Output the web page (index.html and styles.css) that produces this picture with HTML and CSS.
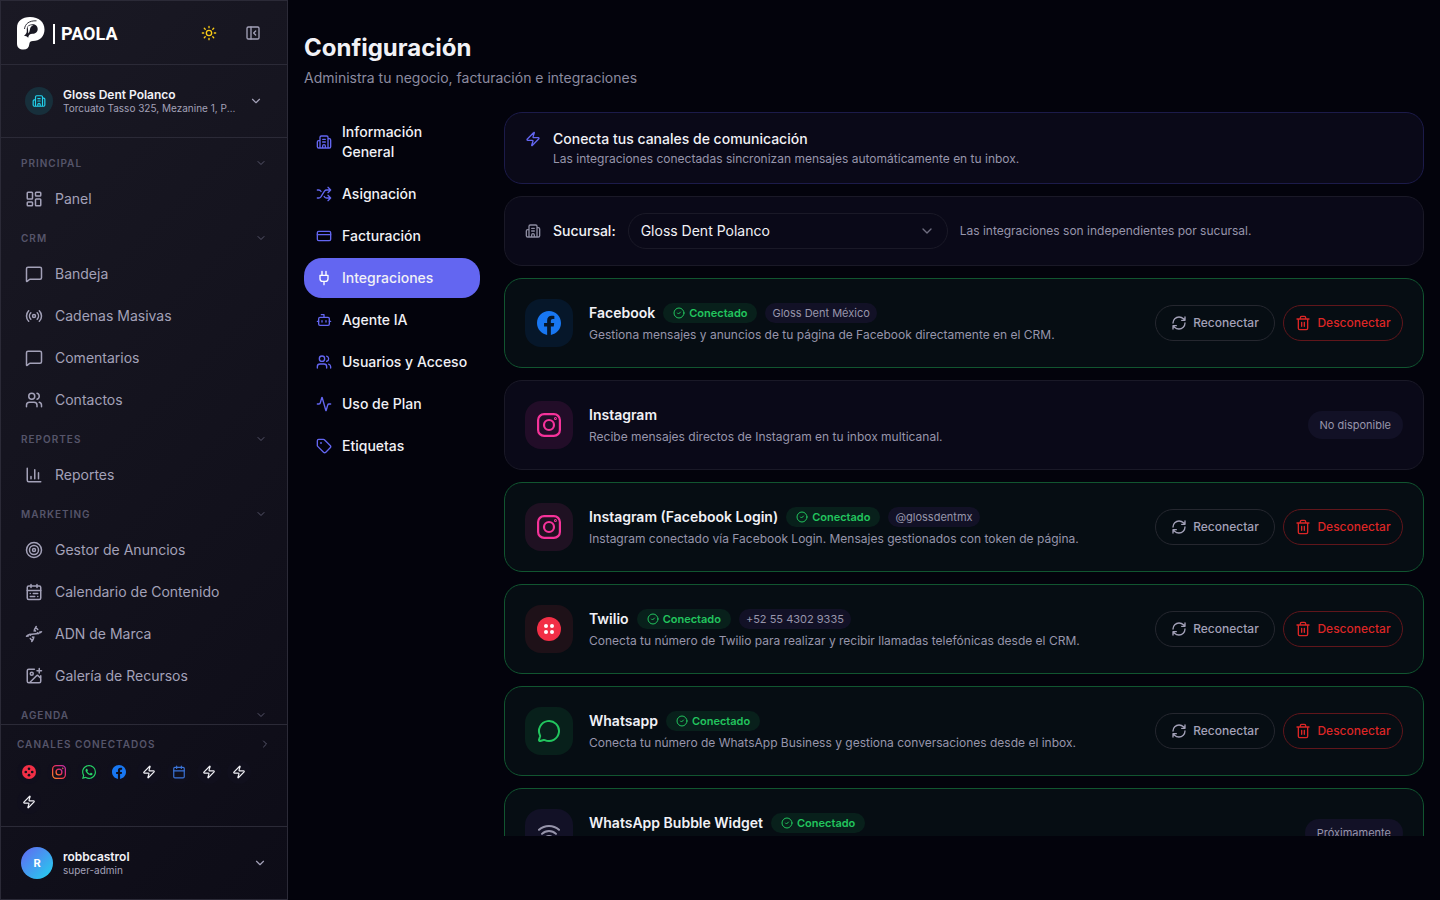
FILE: index.html
```html
<!DOCTYPE html>
<html lang="es">
<head>
  <meta charset="UTF-8">
  <meta name="viewport" content="width=device-width, initial-scale=1.0">
  <title>PAOLA - Configuración</title>
  <link rel="stylesheet" href="styles.css">
</head>
<body>
  <svg class="sprite" aria-hidden="true">
    <defs>
      <linearGradient id="ig" x1="0" y1="1" x2="1" y2="0">
        <stop offset="0" stop-color="#fd8a2b"/>
        <stop offset="0.5" stop-color="#f0314f"/>
        <stop offset="1" stop-color="#c22fb0"/>
      </linearGradient>
    </defs>
    <symbol id="chevron-down" viewBox="0 0 24 24"><path d="m6 9 6 6 6-6"/></symbol>
    <symbol id="chevron-right" viewBox="0 0 24 24"><path d="m9 18 6-6-6-6"/></symbol>
    <symbol id="sun" viewBox="0 0 24 24"><circle cx="12" cy="12" r="4"/><path d="M12 2v2M12 20v2M4.93 4.93l1.41 1.41M17.66 17.66l1.41 1.41M2 12h2M20 12h2M6.34 17.66l-1.41 1.41M19.07 4.93l-1.41 1.41"/></symbol>
    <symbol id="panel-close" viewBox="0 0 24 24"><rect x="3" y="3" width="18" height="18" rx="2"/><path d="M9 3v18M16 15l-3-3 3-3"/></symbol>
    <symbol id="building" viewBox="0 0 24 24"><path d="M10 12h4M10 8h4M14 21v-3a2 2 0 0 0-4 0v3M6 10H4a2 2 0 0 0-2 2v7a2 2 0 0 0 2 2h16a2 2 0 0 0 2-2V9a2 2 0 0 0-2-2h-2M6 21V5a2 2 0 0 1 2-2h8a2 2 0 0 1 2 2v16"/></symbol>
    <symbol id="dashboard" viewBox="0 0 24 24"><rect x="3" y="3" width="7" height="9" rx="1"/><rect x="14" y="3" width="7" height="5" rx="1"/><rect x="14" y="12" width="7" height="9" rx="1"/><rect x="3" y="16" width="7" height="5" rx="1"/></symbol>
    <symbol id="message" viewBox="0 0 24 24"><path d="M22 17a2 2 0 0 1-2 2H6.828a2 2 0 0 0-1.414.586l-2.202 2.202A.71.71 0 0 1 2 21.286V5a2 2 0 0 1 2-2h16a2 2 0 0 1 2 2z"/></symbol>
    <symbol id="radio" viewBox="0 0 24 24"><path d="M16.247 7.761a6 6 0 0 1 0 8.478M19.075 4.933a10 10 0 0 1 0 14.134M4.925 19.067a10 10 0 0 1 0-14.134M7.753 16.239a6 6 0 0 1 0-8.478"/><circle cx="12" cy="12" r="2"/></symbol>
    <symbol id="users" viewBox="0 0 24 24"><path d="M16 21v-2a4 4 0 0 0-4-4H6a4 4 0 0 0-4 4v2M16 3.128a4 4 0 0 1 0 7.744M22 21v-2a4 4 0 0 0-3-3.87"/><circle cx="9" cy="7" r="4"/></symbol>
    <symbol id="chart" viewBox="0 0 24 24"><path d="M3 3v16a2 2 0 0 0 2 2h16M18 17V9M13 17V5M8 17v-3"/></symbol>
    <symbol id="target" viewBox="0 0 24 24"><circle cx="12" cy="12" r="10"/><circle cx="12" cy="12" r="6"/><circle cx="12" cy="12" r="2"/></symbol>
    <symbol id="calendar-range" viewBox="0 0 24 24"><rect x="3" y="4" width="18" height="18" rx="2"/><path d="M16 2v4M3 10h18M8 2v4M17 14h-6M13 18H7M7 14h.01M17 18h.01"/></symbol>
    <symbol id="calendar" viewBox="0 0 24 24"><rect x="3" y="4" width="18" height="18" rx="2"/><path d="M16 2v4M3 10h18M8 2v4"/></symbol>
    <symbol id="dna" viewBox="0 0 24 24"><path d="m10 16 1.5 1.5M14 8l-1.5-1.5M15 2c-1.798 1.998-2.518 3.995-2.807 5.993M16.5 10.5l1 1M17 6l-2.891-2.891M2 15c6.667-6 13.333 0 20-6M20 9l.891.891M3.109 14.109 4 15M6.5 12.5l1 1M7 18l2.891 2.891M9 22c1.798-1.998 2.518-3.995 2.807-5.993"/></symbol>
    <symbol id="image-plus" viewBox="0 0 24 24"><path d="M16 5h6M19 2v6M21 11.5V19a2 2 0 0 1-2 2H5a2 2 0 0 1-2-2V5a2 2 0 0 1 2-2h7.5M21 15l-3.086-3.086a2 2 0 0 0-2.828 0L6 21"/><circle cx="9" cy="9" r="2"/></symbol>
    <symbol id="zap" viewBox="0 0 24 24"><path d="M4 14a1 1 0 0 1-.78-1.63l9.9-10.2a.5.5 0 0 1 .86.46l-1.92 6.02A1 1 0 0 0 13 10h7a1 1 0 0 1 .78 1.63l-9.9 10.2a.5.5 0 0 1-.86-.46l1.92-6.02A1 1 0 0 0 11 14z"/></symbol>
    <symbol id="shuffle" viewBox="0 0 24 24"><path d="m18 14 4 4-4 4M18 2l4 4-4 4M2 18h1.973a4 4 0 0 0 3.3-1.7l5.454-8.6a4 4 0 0 1 3.3-1.7H22M2 6h1.972a4 4 0 0 1 3.6 2.2M22 18h-6.041a4 4 0 0 1-3.3-1.8l-.359-.45"/></symbol>
    <symbol id="card" viewBox="0 0 24 24"><rect x="2" y="5" width="20" height="14" rx="2"/><path d="M2 10h20"/></symbol>
    <symbol id="plug" viewBox="0 0 24 24"><path d="M12 22v-5M9 8V2M15 8V2M18 8v5a4 4 0 0 1-4 4h-4a4 4 0 0 1-4-4V8Z"/></symbol>
    <symbol id="bot" viewBox="0 0 24 24"><path d="M12 8V4H8M2 14h2M20 14h2M15 13v2M9 13v2"/><rect x="4" y="8" width="16" height="12" rx="2"/></symbol>
    <symbol id="activity" viewBox="0 0 24 24"><path d="M22 12h-2.48a2 2 0 0 0-1.93 1.46l-2.35 8.36a.25.25 0 0 1-.48 0L9.24 2.18a.25.25 0 0 0-.48 0l-2.35 8.36A2 2 0 0 1 4.49 12H2"/></symbol>
    <symbol id="tag" viewBox="0 0 24 24"><path d="M12.586 2.586A2 2 0 0 0 11.172 2H4a2 2 0 0 0-2 2v7.172a2 2 0 0 0 .586 1.414l8.704 8.704a2.426 2.426 0 0 0 3.42 0l6.58-6.58a2.426 2.426 0 0 0 0-3.42z"/><circle cx="7.5" cy="7.5" r=".5"/></symbol>
    <symbol id="check-circle" viewBox="0 0 24 24"><circle cx="12" cy="12" r="10"/><path d="m9 12 2 2 4-4"/></symbol>
    <symbol id="refresh" viewBox="0 0 24 24"><path d="M3 12a9 9 0 0 1 9-9 9.75 9.75 0 0 1 6.74 2.74L21 8M21 3v5h-5M21 12a9 9 0 0 1-9 9 9.75 9.75 0 0 1-6.74-2.74L3 16M8 16H3v5"/></symbol>
    <symbol id="trash" viewBox="0 0 24 24"><path d="M3 6h18M19 6v14a2 2 0 0 1-2 2H7a2 2 0 0 1-2-2V6M8 6V4a2 2 0 0 1 2-2h4a2 2 0 0 1 2 2v2M10 11v6M14 11v6"/></symbol>
    <symbol id="bubble" viewBox="0 0 24 24"><path d="M2.992 16.342a2 2 0 0 1 .094 1.167l-1.065 3.29a1 1 0 0 0 1.236 1.168l3.413-.998a2 2 0 0 1 1.099.092 10 10 0 1 0-4.777-4.719"/></symbol>
    <symbol id="wifi" viewBox="0 0 24 24"><path d="M12 20h.01M2 8.82a15 15 0 0 1 20 0M5 12.859a10 10 0 0 1 14 0M8.5 16.429a5 5 0 0 1 7 0"/></symbol>
    <symbol id="instagram" viewBox="0 0 24 24"><rect x="1.100" y="1.100" width="21.800" height="21.800" rx="6" stroke-width="2.200"/><circle cx="12" cy="12" r="5" stroke-width="2.200"/><circle cx="18.400" cy="5.600" r=".5"/></symbol>
    <symbol id="facebook" viewBox="0 0 24 24"><path fill="#1877f2" stroke="none" d="M24 12.073c0-6.627-5.373-12-12-12s-12 5.373-12 12c0 5.99 4.388 10.954 10.125 11.854v-8.385H7.078v-3.47h3.047V9.43c0-3.007 1.792-4.669 4.533-4.669 1.312 0 2.686.235 2.686.235v2.953H15.83c-1.491 0-1.956.925-1.956 1.874v2.25h3.328l-.532 3.47h-2.796v8.385C19.612 23.027 24 18.062 24 12.073z"/></symbol>
    <symbol id="twilio" viewBox="0 0 24 24"><circle cx="12" cy="12" r="12" fill="#f22f46" stroke="none"/><g fill="#fff" stroke="none"><circle cx="9" cy="9" r="2"/><circle cx="15" cy="9" r="2"/><circle cx="9" cy="15" r="2"/><circle cx="15" cy="15" r="2"/></g></symbol>
    <symbol id="twilio-mini" viewBox="0 0 24 24"><circle cx="12" cy="12" r="12" fill="#f22f46" stroke="none"/><g fill="#12111c" stroke="none"><circle cx="12" cy="6.5" r="2.3"/><circle cx="6.5" cy="12" r="2.3"/><circle cx="17.5" cy="12" r="2.3"/><circle cx="12" cy="17.5" r="2.3"/></g></symbol>
    <symbol id="whatsapp" viewBox="0 0 24 24"><path fill="#25d366" stroke="none" d="M17.472 14.382c-.297-.149-1.758-.867-2.03-.967-.273-.099-.471-.148-.67.15-.197.297-.767.966-.94 1.164-.173.199-.347.223-.644.075-.297-.15-1.255-.463-2.39-1.475-.883-.788-1.48-1.761-1.653-2.059-.173-.297-.018-.458.13-.606.134-.133.298-.347.446-.52.149-.174.198-.298.298-.497.099-.198.05-.371-.025-.52-.075-.149-.669-1.612-.916-2.207-.242-.579-.487-.5-.669-.51-.173-.008-.371-.01-.57-.01-.198 0-.52.074-.792.372-.272.297-1.04 1.016-1.04 2.479 0 1.462 1.065 2.875 1.213 3.074.149.198 2.096 3.2 5.077 4.487.709.306 1.262.489 1.694.625.712.227 1.36.195 1.871.118.571-.085 1.758-.719 2.006-1.413.248-.694.248-1.289.173-1.413-.074-.124-.272-.198-.57-.347m-5.421 7.403h-.004a9.87 9.87 0 01-5.031-1.378l-.361-.214-3.741.982.998-3.648-.235-.374a9.86 9.86 0 01-1.51-5.26c.001-5.45 4.436-9.884 9.888-9.884 2.64 0 5.122 1.03 6.988 2.898a9.825 9.825 0 012.893 6.994c-.003 5.45-4.437 9.884-9.885 9.884m8.413-18.297A11.815 11.815 0 0012.05 0C5.495 0 .16 5.335.157 11.892c0 2.096.547 4.142 1.588 5.945L.057 24l6.305-1.654a11.882 11.882 0 005.683 1.448h.005c6.554 0 11.89-5.335 11.893-11.893a11.821 11.821 0 00-3.48-8.413z"/></symbol>
  </svg>

  <aside class="sidebar">
    <div class="sidebar-header">
      <a href="#" class="logo">
        <svg class="logo-mark" viewBox="0 0 28 33" aria-hidden="true">
          <path fill="#fff" d="M0 11C0 4 5 0 13 0c9 0 14.500 5 14.500 12.500 0 7-5 11.500-11.500 11.500-2.500 0-3.500 1-3.700 3.200C12 30.500 10 32.500 6.500 32.500 2.500 32.500 0 30.500 0 26.500z"/>
          <path fill="#191823" d="M10.500 9.500c1.200-1.600 3-2.300 5-2.300 3 0 5.200 2 5.200 4.800 0 2.900-2.200 4.800-5.200 4.800-2.700 0-4 1.500-4.300 4-1-1.300-2.500-2-4.200-2 2.200-1.500 3-3.300 2.800-5.300-.1-1.600 0-2.900.7-4z"/>
          <path fill="#fff" d="M10.500 9.800c1.500-1.500 4-2 6-1.200-1.500.4-2.600 1.100-3.200 2.400-.6 1.500-.3 3.500-1.800 5.500-.6-2.500-.3-4.500-1-6.700z"/>
          <path fill="none" stroke="#191823" stroke-width="0.900" d="M7.500 12C8 7 12 3.500 19.500 3.800"/>
        </svg>
        <span class="logo-bar"></span>
        <span class="logo-text">PAOLA</span>
      </a>
      <button type="button" class="icon-button sun" aria-label="Cambiar tema"><svg class="icon"><use href="#sun"/></svg></button>
      <button type="button" class="icon-button" aria-label="Contraer menú"><svg class="icon"><use href="#panel-close"/></svg></button>
    </div>

    <button type="button" class="account business">
      <span class="business-icon"><svg class="icon icon-sm"><use href="#building"/></svg></span>
      <span class="account-text">
        <span class="account-name">Gloss Dent Polanco</span>
        <span class="account-detail">Torcuato Tasso 325, Mezanine 1, Polanco</span>
      </span>
      <svg class="icon icon-sm"><use href="#chevron-down"/></svg>
    </button>

    <nav class="menu">
      <div class="menu-group">
        <button type="button" class="menu-title">PRINCIPAL<svg class="icon icon-xs"><use href="#chevron-down"/></svg></button>
        <a href="#" class="menu-item"><svg class="icon icon-md"><use href="#dashboard"/></svg>Panel</a>
      </div>
      <div class="menu-group">
        <button type="button" class="menu-title">CRM<svg class="icon icon-xs"><use href="#chevron-down"/></svg></button>
        <a href="#" class="menu-item"><svg class="icon icon-md"><use href="#message"/></svg>Bandeja</a>
        <a href="#" class="menu-item"><svg class="icon icon-md"><use href="#radio"/></svg>Cadenas Masivas</a>
        <a href="#" class="menu-item"><svg class="icon icon-md"><use href="#message"/></svg>Comentarios</a>
        <a href="#" class="menu-item"><svg class="icon icon-md"><use href="#users"/></svg>Contactos</a>
      </div>
      <div class="menu-group">
        <button type="button" class="menu-title">REPORTES<svg class="icon icon-xs"><use href="#chevron-down"/></svg></button>
        <a href="#" class="menu-item"><svg class="icon icon-md"><use href="#chart"/></svg>Reportes</a>
      </div>
      <div class="menu-group">
        <button type="button" class="menu-title">MARKETING<svg class="icon icon-xs"><use href="#chevron-down"/></svg></button>
        <a href="#" class="menu-item"><svg class="icon icon-md"><use href="#target"/></svg>Gestor de Anuncios</a>
        <a href="#" class="menu-item"><svg class="icon icon-md"><use href="#calendar-range"/></svg>Calendario de Contenido</a>
        <a href="#" class="menu-item"><svg class="icon icon-md"><use href="#dna"/></svg>ADN de Marca</a>
        <a href="#" class="menu-item"><svg class="icon icon-md"><use href="#image-plus"/></svg>Galería de Recursos</a>
      </div>
      <div class="menu-group">
        <button type="button" class="menu-title">AGENDA<svg class="icon icon-xs"><use href="#chevron-down"/></svg></button>
      </div>
    </nav>

    <div class="channels">
      <button type="button" class="menu-title channels-title">CANALES CONECTADOS<svg class="icon icon-xs"><use href="#chevron-right"/></svg></button>
      <div class="channel-list">
        <span class="channel"><svg class="icon icon-sm"><use href="#twilio-mini"/></svg></span>
        <span class="channel"><svg class="icon icon-sm channel-ig"><use href="#instagram"/></svg></span>
        <span class="channel"><svg class="icon icon-sm"><use href="#whatsapp"/></svg></span>
        <span class="channel"><svg class="icon icon-sm"><use href="#facebook"/></svg></span>
        <span class="channel"><svg class="icon icon-sm"><use href="#zap"/></svg></span>
        <span class="channel channel-calendar"><svg class="icon icon-sm"><use href="#calendar"/></svg></span>
        <span class="channel"><svg class="icon icon-sm"><use href="#zap"/></svg></span>
        <span class="channel"><svg class="icon icon-sm"><use href="#zap"/></svg></span>
        <span class="channel"><svg class="icon icon-sm"><use href="#zap"/></svg></span>
      </div>
    </div>

    <button type="button" class="account user">
      <span class="avatar">R</span>
      <span class="account-text">
        <span class="account-name">robbcastrol</span>
        <span class="account-detail">super-admin</span>
      </span>
      <svg class="icon icon-sm"><use href="#chevron-down"/></svg>
    </button>
  </aside>

  <main>
    <header>
      <h1>Configuración</h1>
      <p>Administra tu negocio, facturación e integraciones</p>
    </header>

    <div class="settings">
      <nav class="tabs">
        <a href="#" class="tab"><svg class="icon"><use href="#building"/></svg>Información General</a>
        <a href="#" class="tab"><svg class="icon"><use href="#shuffle"/></svg>Asignación</a>
        <a href="#" class="tab"><svg class="icon"><use href="#card"/></svg>Facturación</a>
        <a href="#" class="tab active"><svg class="icon"><use href="#plug"/></svg>Integraciones</a>
        <a href="#" class="tab"><svg class="icon"><use href="#bot"/></svg>Agente IA</a>
        <a href="#" class="tab"><svg class="icon"><use href="#users"/></svg>Usuarios y Acceso</a>
        <a href="#" class="tab"><svg class="icon"><use href="#activity"/></svg>Uso de Plan</a>
        <a href="#" class="tab"><svg class="icon"><use href="#tag"/></svg>Etiquetas</a>
      </nav>

      <section class="cards">
        <div class="card notice">
          <svg class="icon"><use href="#zap"/></svg>
          <div>
            <h2>Conecta tus canales de comunicación</h2>
            <p>Las integraciones conectadas sincronizan mensajes automáticamente en tu inbox.</p>
          </div>
        </div>

        <div class="card branch">
          <svg class="icon"><use href="#building"/></svg>
          <label for="branch">Sucursal:</label>
          <div class="select-wrap">
            <select id="branch">
              <option>Gloss Dent Polanco</option>
            </select>
            <svg class="icon"><use href="#chevron-down"/></svg>
          </div>
          <p>Las integraciones son independientes por sucursal.</p>
        </div>

        <article class="card integration connected">
          <span class="brand brand-facebook"><svg class="icon icon-lg"><use href="#facebook"/></svg></span>
          <div class="integration-text">
            <div class="integration-title">
              <h3>Facebook</h3>
              <span class="status"><svg class="icon icon-xs"><use href="#check-circle"/></svg>Conectado</span>
              <span class="handle">Gloss Dent México</span>
            </div>
            <p>Gestiona mensajes y anuncios de tu página de Facebook directamente en el CRM.</p>
          </div>
          <div class="actions">
            <button type="button" class="action"><svg class="icon"><use href="#refresh"/></svg>Reconectar</button>
            <button type="button" class="action danger"><svg class="icon"><use href="#trash"/></svg>Desconectar</button>
          </div>
        </article>

        <article class="card integration">
          <span class="brand brand-instagram"><svg class="icon icon-lg"><use href="#instagram"/></svg></span>
          <div class="integration-text">
            <div class="integration-title">
              <h3>Instagram</h3>
            </div>
            <p>Recibe mensajes directos de Instagram en tu inbox multicanal.</p>
          </div>
          <span class="soon">No disponible</span>
        </article>

        <article class="card integration connected">
          <span class="brand brand-instagram"><svg class="icon icon-lg"><use href="#instagram"/></svg></span>
          <div class="integration-text">
            <div class="integration-title">
              <h3>Instagram (Facebook Login)</h3>
              <span class="status"><svg class="icon icon-xs"><use href="#check-circle"/></svg>Conectado</span>
              <span class="handle">@glossdentmx</span>
            </div>
            <p>Instagram conectado vía Facebook Login. Mensajes gestionados con token de página.</p>
          </div>
          <div class="actions">
            <button type="button" class="action"><svg class="icon"><use href="#refresh"/></svg>Reconectar</button>
            <button type="button" class="action danger"><svg class="icon"><use href="#trash"/></svg>Desconectar</button>
          </div>
        </article>

        <article class="card integration connected">
          <span class="brand brand-twilio"><svg class="icon icon-lg"><use href="#twilio"/></svg></span>
          <div class="integration-text">
            <div class="integration-title">
              <h3>Twilio</h3>
              <span class="status"><svg class="icon icon-xs"><use href="#check-circle"/></svg>Conectado</span>
              <span class="handle">+52 55 4302 9335</span>
            </div>
            <p>Conecta tu número de Twilio para realizar y recibir llamadas telefónicas desde el CRM.</p>
          </div>
          <div class="actions">
            <button type="button" class="action"><svg class="icon"><use href="#refresh"/></svg>Reconectar</button>
            <button type="button" class="action danger"><svg class="icon"><use href="#trash"/></svg>Desconectar</button>
          </div>
        </article>

        <article class="card integration connected">
          <span class="brand brand-whatsapp"><svg class="icon icon-lg"><use href="#bubble"/></svg></span>
          <div class="integration-text">
            <div class="integration-title">
              <h3>Whatsapp</h3>
              <span class="status"><svg class="icon icon-xs"><use href="#check-circle"/></svg>Conectado</span>
            </div>
            <p>Conecta tu número de WhatsApp Business y gestiona conversaciones desde el inbox.</p>
          </div>
          <div class="actions">
            <button type="button" class="action"><svg class="icon"><use href="#refresh"/></svg>Reconectar</button>
            <button type="button" class="action danger"><svg class="icon"><use href="#trash"/></svg>Desconectar</button>
          </div>
        </article>

        <article class="card integration connected">
          <span class="brand"><svg class="icon icon-lg"><use href="#wifi"/></svg></span>
          <div class="integration-text">
            <div class="integration-title">
              <h3>WhatsApp Bubble Widget</h3>
              <span class="status"><svg class="icon icon-xs"><use href="#check-circle"/></svg>Conectado</span>
            </div>
          </div>
          <span class="soon">Próximamente</span>
        </article>
      </section>
    </div>
  </main>
</body>
</html>
```
FILE: styles.css
```css
* {
  box-sizing: border-box;
}

body {
  display: flex;
  height: 100vh;
  margin: 0;
  overflow: hidden;
  background-color: #03030c;
  color: #f1f1f6;
  font-family: Inter, "Liberation Sans", Arial, sans-serif;
  font-size: 14px;
  line-height: 20px;
}

h1,
h2,
h3,
p {
  margin: 0;
}

a {
  color: inherit;
  text-decoration: none;
}

button,
select {
  margin: 0;
  border: none;
  background: none;
  color: inherit;
  font: inherit;
  cursor: pointer;
}

.sprite {
  position: absolute;
  width: 0;
  height: 0;
}

.icon {
  flex: none;
  width: 16px;
  height: 16px;
  overflow: visible;
  fill: none;
  stroke: currentColor;
  stroke-width: 2;
  stroke-linecap: round;
  stroke-linejoin: round;
}

.icon-xs {
  width: 12px;
  height: 12px;
}

.icon-sm {
  width: 14px;
  height: 14px;
}

.icon-md {
  width: 18px;
  height: 18px;
}

.icon-lg {
  width: 24px;
  height: 24px;
}

/* Sidebar */

.sidebar {
  display: flex;
  flex: none;
  flex-direction: column;
  width: 288px;
  border: 1px solid #2b2a37;
  background: linear-gradient(135deg, #1a1924, #0d0c17);
  color: #a3a1b8;
}

.sidebar-header {
  display: flex;
  flex: none;
  align-items: center;
  gap: 8px;
  height: 64px;
  padding: 0 16px;
  border-bottom: 1px solid #2b2a37;
}

.logo {
  display: flex;
  flex: 1;
  align-items: center;
  padding-top: 2px;
  color: #fff;
}

.logo-mark {
  width: 28px;
  height: 33px;
}

.logo-bar {
  width: 2px;
  height: 20px;
  margin: 0 6px 0 8px;
  background-color: #fff;
}

.logo-text {
  font-family: Roboto, sans-serif;
  font-size: 18px;
  font-weight: 700;
}

.icon-button {
  display: flex;
  align-items: center;
  justify-content: center;
  width: 36px;
  height: 36px;
  padding: 0;
}

.icon-button.sun {
  color: #facc15;
}

.account {
  display: flex;
  flex: none;
  align-items: center;
  gap: 10px;
  height: 72px;
  padding: 0 20px;
  text-align: left;
}

.business {
  height: 73px;
  padding: 0 24px;
  border-bottom: 1px solid #2b2a37;
}

.business-icon {
  display: flex;
  align-items: center;
  justify-content: center;
  width: 28px;
  height: 28px;
  border-radius: 50%;
  background-color: #172f3b;
  color: #22d3ee;
}

.account-text {
  flex: 1;
  min-width: 0;
}

.account-name,
.account-detail {
  display: block;
  overflow: hidden;
  text-overflow: ellipsis;
  white-space: nowrap;
}

.account-name {
  color: #f1f1f6;
  font-size: 12px;
  font-weight: 600;
  line-height: 14px;
}

.account-detail {
  font-size: 10px;
  line-height: 12px;
}

.menu {
  display: flex;
  flex: 1;
  flex-direction: column;
  gap: 5px;
  min-height: 0;
  padding: 11px 12px 0;
  overflow: hidden;
}

.menu-group {
  display: flex;
  flex: none;
  flex-direction: column;
  gap: 2px;
}

.menu-title {
  display: flex;
  align-items: center;
  justify-content: space-between;
  height: 28px;
  padding: 0 8px;
  color: #56556a;
  font-size: 10px;
  font-weight: 600;
  letter-spacing: 1px;
}

.menu-item {
  display: flex;
  align-items: center;
  gap: 12px;
  height: 40px;
  padding: 0 12px;
}

.channels {
  flex: none;
  padding: 9px 16px 12px;
  border-top: 1px solid #2b2a37;
  border-bottom: 1px solid #2b2a37;
}

.channels-title {
  width: 100%;
  height: 20px;
  padding: 0;
}

.channel-list {
  display: flex;
  flex-wrap: wrap;
  gap: 6px;
  padding-top: 6px;
}

.channel {
  display: flex;
  align-items: center;
  justify-content: center;
  width: 24px;
  height: 24px;
  border-radius: 50%;
  background-color: #100f1c;
  color: #f1f1f6;
}

.channel-ig {
  stroke: url(#ig);
}

.channel-calendar {
  color: #3b74d8;
}

.avatar {
  display: flex;
  align-items: center;
  justify-content: center;
  width: 32px;
  height: 32px;
  border-radius: 50%;
  background: linear-gradient(135deg, #6366f1, #22d3ee);
  color: #fff;
  font-size: 11px;
  font-weight: 700;
}

/* Main */

main {
  display: flex;
  flex: 1;
  flex-direction: column;
  gap: 24px;
  min-width: 0;
  padding: 32px 16px 64px;
}

h1 {
  font-size: 24px;
  font-weight: 700;
  line-height: 32px;
}

header p {
  margin-top: 4px;
  color: #8c8ba0;
}

.settings {
  display: flex;
  flex: 1;
  gap: 24px;
  min-height: 0;
}

.tabs {
  display: flex;
  flex: none;
  flex-direction: column;
  gap: 2px;
  width: 176px;
}

.tab {
  display: flex;
  align-items: center;
  gap: 10px;
  padding: 10px 12px;
  border-radius: 18px;
  font-weight: 500;
}

.tab .icon {
  color: #6366f1;
}

.tab.active {
  background-color: #6366f1;
}

.tab.active .icon {
  color: #fff;
}

.cards {
  display: flex;
  flex: 1;
  flex-direction: column;
  gap: 12px;
  min-width: 0;
  overflow: hidden;
}

.card {
  display: flex;
  flex: none;
  align-items: center;
  gap: 12px;
  padding: 16px 20px;
  border: 1px solid #1a1927;
  border-radius: 18px;
  background-color: #0a0918;
}

.card p {
  color: #9795ab;
  font-size: 12px;
  line-height: 16px;
}

.notice {
  align-items: flex-start;
  border-color: #1c1b4a;
}

.notice .icon {
  margin-top: 2px;
  color: #6366f1;
}

.notice h2 {
  margin-bottom: 2px;
  font-size: 14px;
  font-weight: 500;
}

.branch .icon {
  color: #8c8ba0;
}

.branch label {
  font-weight: 500;
}

.select-wrap {
  position: relative;
  width: 320px;
}

.select-wrap select {
  display: block;
  width: 100%;
  height: 36px;
  padding: 0 36px 0 12px;
  border: 1px solid #1a1927;
  border-radius: 18px;
  appearance: none;
}

.select-wrap .icon {
  position: absolute;
  top: 10px;
  right: 13px;
  color: #6f6e80;
  pointer-events: none;
}

.integration {
  gap: 16px;
  min-height: 90px;
  padding: 20px;
}

.connected {
  border-color: #115530;
  background-color: #060d13;
}

.brand {
  display: flex;
  flex: none;
  align-items: center;
  justify-content: center;
  width: 48px;
  height: 48px;
  border-radius: 16px;
  background-color: #121126;
  color: #9795ab;
}

.brand-facebook {
  background-color: #06172a;
}

.brand-instagram {
  background-color: #220d28;
  color: #f6339a;
}

.connected .brand-instagram {
  background-color: #1f1122;
}

.brand-twilio {
  background-color: #1e1118;
}

.brand-whatsapp {
  background-color: #08201b;
  color: #22c55e;
}

.integration-text {
  flex: 1;
  min-width: 0;
  min-height: 40px;
}

.integration-title {
  display: flex;
  align-items: center;
  gap: 8px;
  margin-bottom: 4px;
}

h3 {
  font-size: 14px;
  font-weight: 600;
}

.status,
.handle {
  display: flex;
  align-items: center;
  height: 20px;
  border-radius: 10px;
  font-size: 11px;
}

.status {
  gap: 4px;
  padding: 0 10px;
  background-color: #08201b;
  color: #22c55e;
  font-weight: 600;
}

.handle {
  padding: 0 7px;
  background-color: #121126;
  color: #9795ab;
}

.actions {
  display: flex;
  gap: 8px;
}

.action {
  display: flex;
  align-items: center;
  justify-content: center;
  gap: 6px;
  width: 120px;
  height: 36px;
  padding: 0;
  border: 1px solid #25272f;
  border-radius: 18px;
  color: #a3a1b8;
  font-size: 12px;
  font-weight: 500;
}

.action.danger {
  border-color: #60161b;
  color: #dc2626;
}

.soon {
  padding: 4px 12px;
  border-radius: 14px;
  background-color: #121126;
  color: #9795ab;
  font-size: 11px;
}
```
